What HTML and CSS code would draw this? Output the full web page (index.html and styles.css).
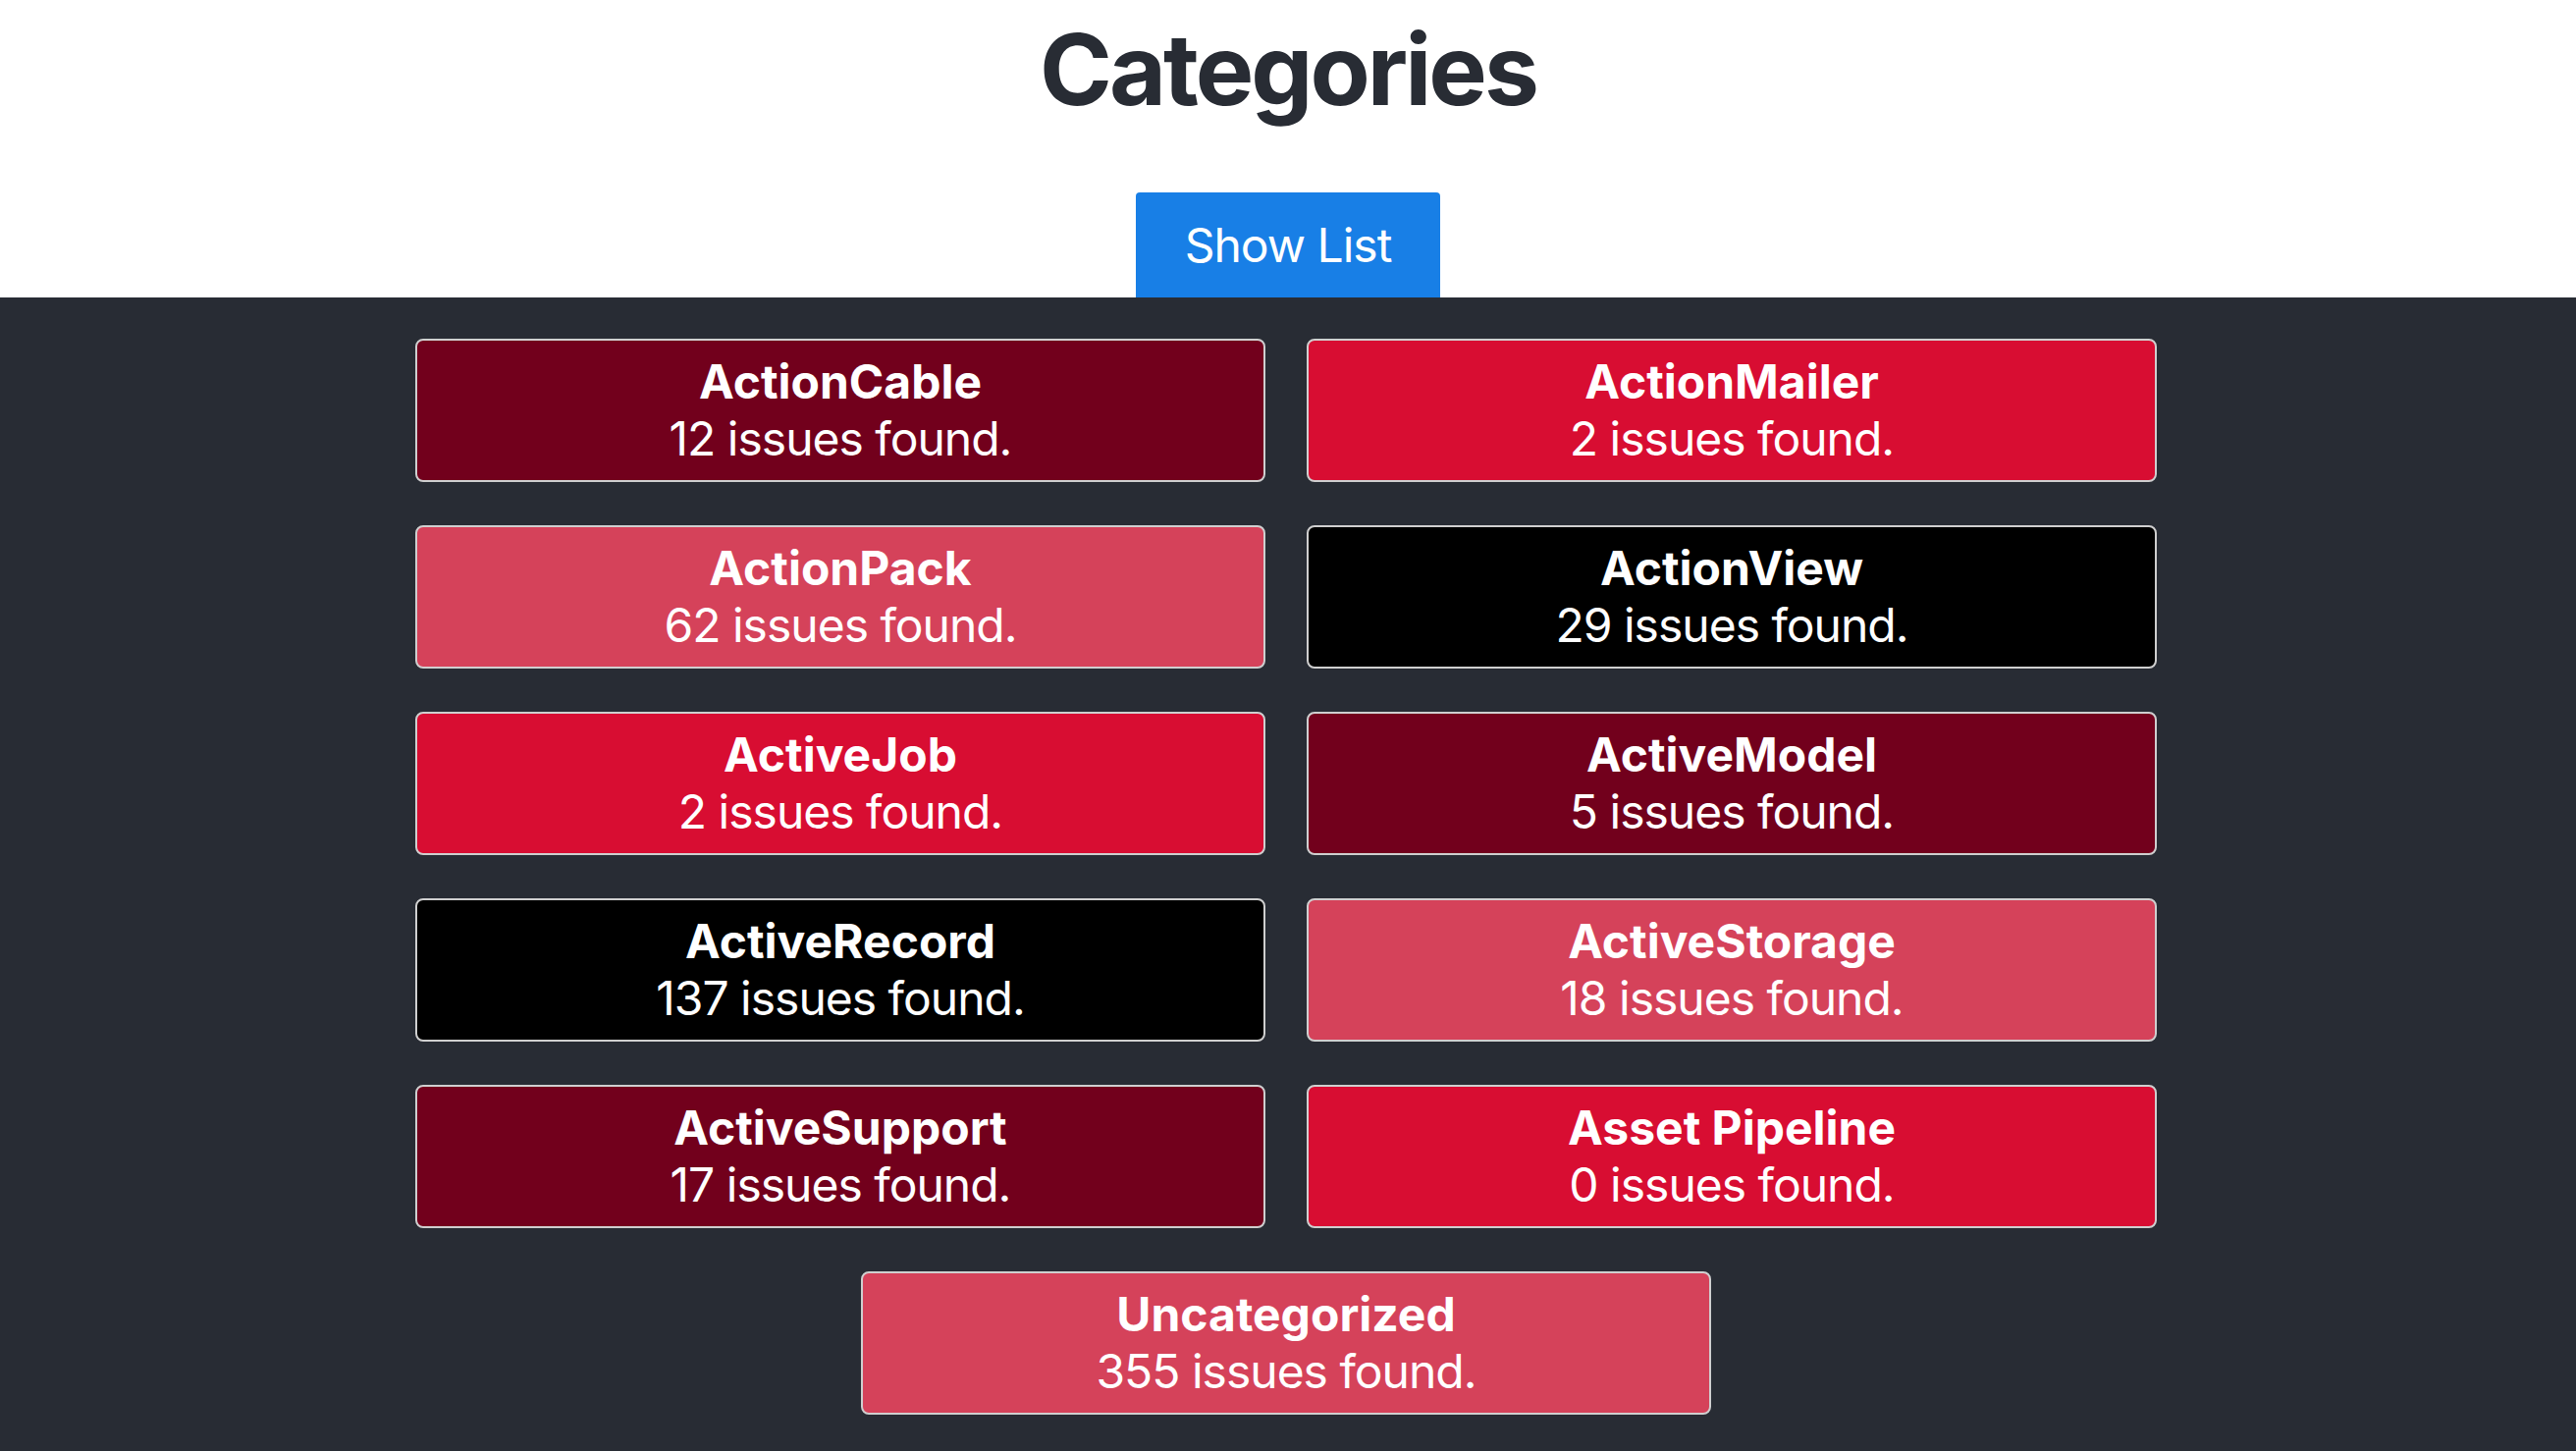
FILE: index.html
```html
<!DOCTYPE html>
<html lang="en">
<head>
<meta charset="utf-8">
<title>Categories</title>
<link rel="stylesheet" href="styles.css">
</head>
<body>
<header class="top">
  <h1 class="title">Categories</h1>
  <button class="btn-show" type="button">Show List</button>
</header>
<main class="board">
  <div class="card maroon"><div class="card-name">ActionCable</div><div class="card-count">12 issues found.</div></div>
  <div class="card crimson"><div class="card-name">ActionMailer</div><div class="card-count">2 issues found.</div></div>
  <div class="card rose"><div class="card-name">ActionPack</div><div class="card-count">62 issues found.</div></div>
  <div class="card black"><div class="card-name">ActionView</div><div class="card-count">29 issues found.</div></div>
  <div class="card crimson"><div class="card-name">ActiveJob</div><div class="card-count">2 issues found.</div></div>
  <div class="card maroon"><div class="card-name">ActiveModel</div><div class="card-count">5 issues found.</div></div>
  <div class="card black"><div class="card-name">ActiveRecord</div><div class="card-count">137 issues found.</div></div>
  <div class="card rose"><div class="card-name">ActiveStorage</div><div class="card-count">18 issues found.</div></div>
  <div class="card maroon"><div class="card-name">ActiveSupport</div><div class="card-count">17 issues found.</div></div>
  <div class="card crimson"><div class="card-name">Asset Pipeline</div><div class="card-count">0 issues found.</div></div>
  <div class="card rose"><div class="card-name">Uncategorized</div><div class="card-count">355 issues found.</div></div>
</main>
</body>
</html>
```
FILE: styles.css
```css
html, body {
  margin: 0;
  padding: 0;
  height: 100%;
}
body {
  font-family: Inter, "Liberation Sans", sans-serif;
  background: #282c34;
  display: flex;
  flex-direction: column;
}
.top {
  background: #ffffff;
  text-align: center;
  padding-top: 11px;
}
.title {
  margin: 0;
  font-size: 100px;
  line-height: 120px;
  font-weight: 700;
  color: #282c34;
  letter-spacing: -3px;
}
.btn-show {
  margin-top: 65px;
  display: inline-block;
  vertical-align: top;
  font-family: Inter, "Liberation Sans", sans-serif;
  font-size: 48px;
  font-weight: 400;
  line-height: 72px;
  letter-spacing: -1px;
  color: #ffffff;
  background: #187fe6;
  border: none;
  border-radius: 4px 4px 0 0;
  padding: 18px 50px 17px;
  cursor: pointer;
}
.board {
  flex: 1;
  background: #282c34;
  display: flex;
  flex-wrap: wrap;
  justify-content: center;
  align-content: flex-start;
  padding: 20px 4px 20px 0;
}
.card {
  box-sizing: border-box;
  width: 866px;
  margin: 22px 21px;
  border: 2px solid #cfcfcf;
  border-radius: 8px;
  padding: 13px 10px 13px;
  text-align: center;
  color: #ffffff;
  font-size: 48px;
  line-height: 58px;
}
.card-name {
  font-weight: 700;
}
.card-count {
  font-weight: 400;
  letter-spacing: -1px;
}
.maroon { background: #72001c; }
.crimson { background: #d80d32; }
.rose { background: #d5425a; }
.black { background: #000000; }
```
